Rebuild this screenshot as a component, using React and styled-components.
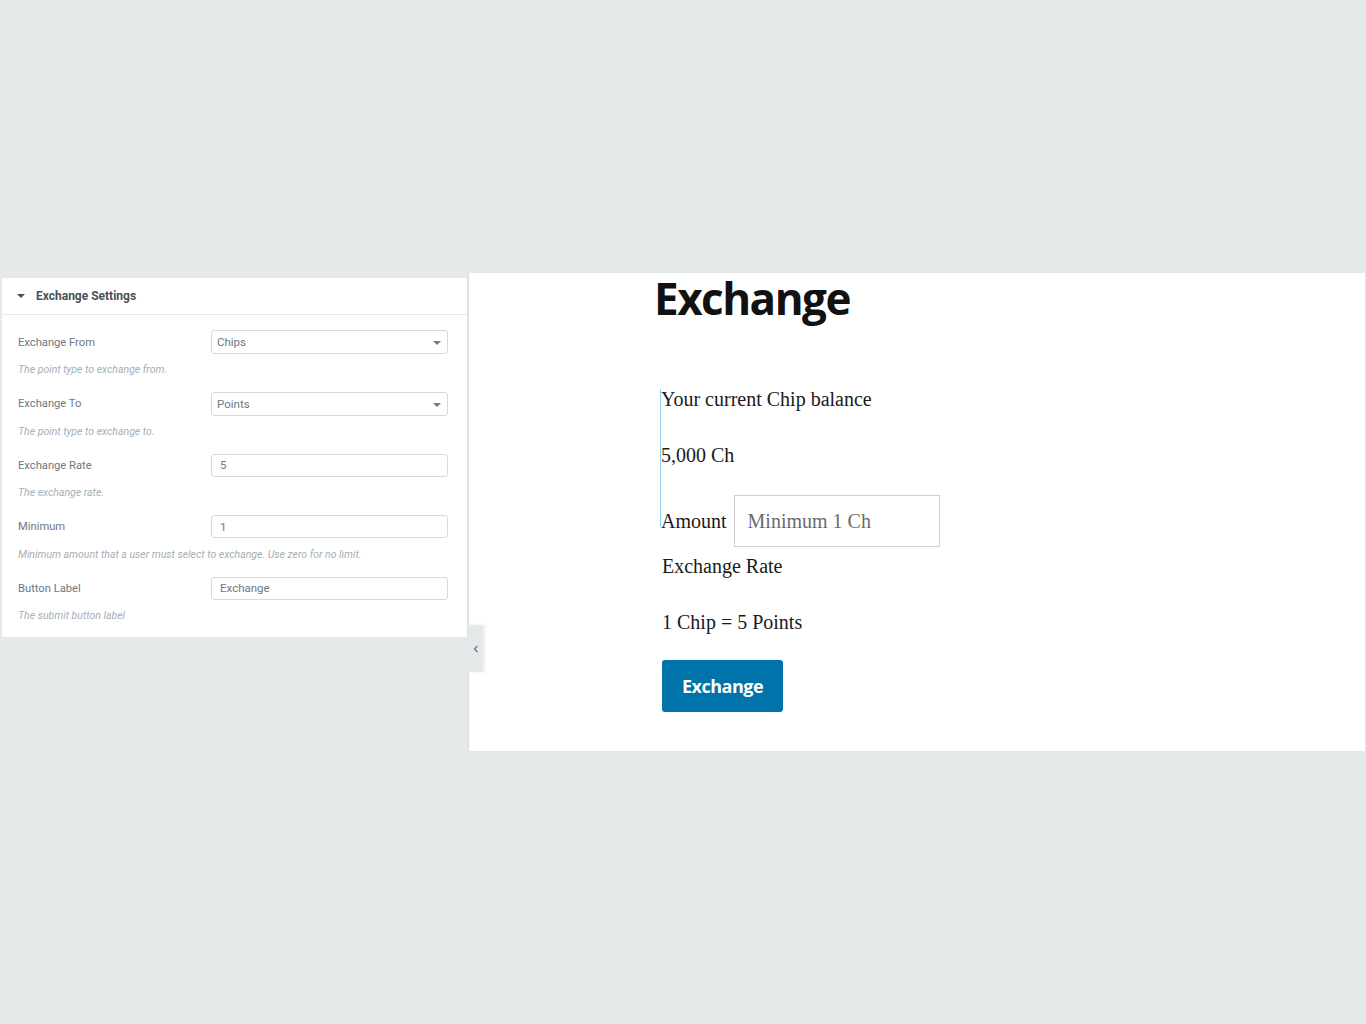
import React from "react";
import styled, { createGlobalStyle } from "styled-components";

const Global = createGlobalStyle`
  html, body { margin: 0; padding: 0; background: #e6e9ea; }
  * { box-sizing: border-box; }
`;

const Page = styled.div`
  min-height: 1024px;
  padding-top: 273px;
  display: flex;
  align-items: flex-start;
`;

const Panel = styled.section`
  width: 465px;
  margin: 5px 0 0 2px;
  background: #fff;
  font-family: Roboto, "Liberation Sans", sans-serif;
  box-shadow: 0 0 1px rgba(0,0,0,0.05);
`;

const PanelHeader = styled.div`
  height: 37px;
  border-bottom: 1px solid #e6e9ec;
  display: flex;
  align-items: center;
  padding-left: 15px;
  gap: 11px;
  font-size: 12px;
  font-weight: 700;
  color: #495157;
`;

const Caret = styled.span`
  width: 0;
  height: 0;
  border-left: 4px solid transparent;
  border-right: 4px solid transparent;
  border-top: 4px solid #495157;
`;

const PanelBody = styled.div`
  padding: 15px 19px 14px 15px;
  display: flex;
  flex-direction: column;
  gap: 14.5px;
`;

const Control = styled.div``;

const ControlRow = styled.div`
  display: flex;
  align-items: center;
  justify-content: space-between;
  height: 24px;
`;

const Label = styled.label`
  font-size: 11.2px;
  color: #6d7882;
  padding-left: 1px;
`;

const Field = styled.div`
  position: relative;
  width: 237px;
  height: ${p => (p.$short ? 23 : 24)}px;
  border: 1px solid #d5dadf;
  border-radius: 3px;
  display: flex;
  align-items: center;
  padding-left: ${p => (p.$select ? 5 : 8)}px;
  font-size: 11.5px;
  color: #6d7882;
`;

const Arrow = styled.span`
  position: absolute;
  right: 6px;
  top: 10px;
  width: 0;
  height: 0;
  border-left: 4px solid transparent;
  border-right: 4px solid transparent;
  border-top: 4px solid #6d7882;
`;

const Desc = styled.div`
  margin-top: 9px;
  font-size: 10.5px;
  line-height: 14px;
  font-style: italic;
  color: #a4afb7;
  padding-left: 1px;
`;

const Preview = styled.main`
  position: relative;
  flex: 1;
  margin-left: 2px;
  margin-right: 1px;
  height: 478px;
  background: #fff;
  padding: 0 0 0 192px;
  box-shadow: -1px 0 1px rgba(0,0,0,0.05);
`;

const CollapseTab = styled.div`
  position: absolute;
  left: -1px;
  top: 352px;
  width: 15px;
  height: 47px;
  background: #e6e9ea;
  box-shadow: 2px 0 3px rgba(0,0,0,0.08);
  display: flex;
  align-items: center;
  justify-content: center;
`;

const Title = styled.h1`
  margin: 0 0 0 -7px;
  font-family: "Open Sans", "Noto Sans", sans-serif;
  font-weight: 700;
  font-size: 44px;
  letter-spacing: -1.5px;
  line-height: 50px;
  color: #111;
`;

const Serif = styled.div`
  font-family: "Liberation Serif", serif;
  font-size: 20px;
  color: #1a1a1a;
`;

const Balance = styled.div`
  position: relative;
  margin-top: 62px;
  &::before {
    content: "";
    position: absolute;
    left: -1px;
    top: 4px;
    bottom: 20px;
    width: 1px;
    background: #8fd3f2;
  }
`;

const Line = styled(Serif)`
  line-height: 28px;
  margin-bottom: ${p => p.$mb ?? 28}px;
`;

const AmountRow = styled(Serif)`
  display: flex;
  align-items: center;
  gap: 7px;
  height: 52px;
`;

const AmountInput = styled.div`
  width: 206px;
  height: 52px;
  border: 1px solid #cfcfcf;
  display: flex;
  align-items: center;
  padding-left: 13px;
  color: #6b6b6b;
  font-family: "Liberation Serif", serif;
  font-size: 20px;
`;

const RateBlock = styled.div`
  padding-left: 1px;
  margin-top: 5px;
`;

const Button = styled.button`
  display: block;
  margin-top: 24px;
  width: 121px;
  height: 52px;
  border: none;
  border-radius: 3px;
  background: #0073aa;
  color: #fff;
  font-family: "Open Sans", "Noto Sans", sans-serif;
  font-weight: 700;
  font-size: 18px;
  letter-spacing: -0.5px;
  cursor: pointer;
`;

const controls = [
  { label: "Exchange From", value: "Chips", select: true, desc: "The point type to exchange from." },
  { label: "Exchange To", value: "Points", select: true, desc: "The point type to exchange to." },
  { label: "Exchange Rate", value: "5", short: true, desc: "The exchange rate." },
  { label: "Minimum", value: "1", short: true, desc: "Minimum amount that a user must select to exchange. Use zero for no limit." },
  { label: "Button Label", value: "Exchange", short: true, desc: "The submit button label" },
];

export default function App() {
  return (
    <>
      <Global />
      <Page>
        <Panel>
          <PanelHeader>
            <Caret />
            Exchange Settings
          </PanelHeader>
          <PanelBody>
            {controls.map(c => (
              <Control key={c.label}>
                <ControlRow>
                  <Label>{c.label}</Label>
                  <Field $select={c.select} $short={c.short}>
                    {c.value}
                    {c.select && <Arrow />}
                  </Field>
                </ControlRow>
                <Desc>{c.desc}</Desc>
              </Control>
            ))}
          </PanelBody>
        </Panel>
        <Preview>
          <CollapseTab>
            <svg width="6" height="8" viewBox="0 0 6 8">
              <path d="M4.5 1 L1.5 4 L4.5 7" fill="none" stroke="#6d7882" strokeWidth="1.3" />
            </svg>
          </CollapseTab>
          <Title>Exchange</Title>
          <Balance>
            <Line>Your current Chip balance</Line>
            <Line $mb={26}>5,000 Ch</Line>
            <AmountRow>
              Amount
              <AmountInput>Minimum 1 Ch</AmountInput>
            </AmountRow>
          </Balance>
          <RateBlock>
            <Line>Exchange Rate</Line>
            <Line $mb={0}>1 Chip = 5 Points</Line>
            <Button>Exchange</Button>
          </RateBlock>
        </Preview>
      </Page>
    </>
  );
}
